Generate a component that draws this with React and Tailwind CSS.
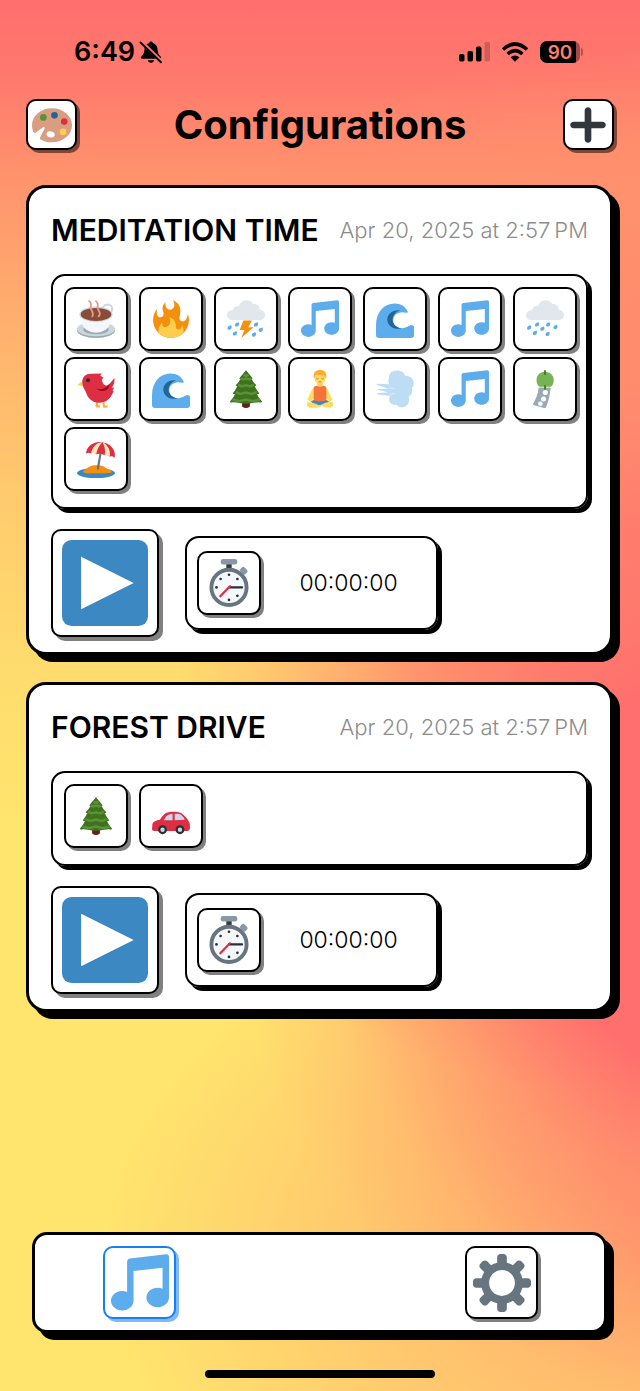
import React, { useState } from "react";

const MusicIcon = () => (
  <path
    fill="#5DADEC"
    d="M34.209.206L11.791 2.793C10.806 2.907 10 3.811 10 4.803v18.782C9.09 23.214 8.075 23 7 23c-3.865 0-7 2.685-7 6 0 3.314 3.135 6 7 6s7-2.686 7-6V10.539l18-2.077v13.124c-.91-.372-1.925-.586-3-.586-3.865 0-7 2.685-7 6 0 3.314 3.135 6 7 6s7-2.686 7-6V1.803c0-.992-.806-1.71-1.791-1.597z"
  />
);

const GearIcon = () => (
  <path
    fill="#66757F"
    d="M34 15h-3.362c-.324-1.369-.864-2.651-1.582-3.814l2.379-2.379c.781-.781.781-2.048 0-2.829l-1.414-1.414c-.781-.781-2.047-.781-2.828 0l-2.379 2.379C23.65 6.225 22.369 5.686 21 5.362V2c0-1.104-.896-2-2-2h-2c-1.104 0-2 .896-2 2v3.362c-1.369.324-2.651.864-3.814 1.582L8.808 4.565c-.781-.781-2.048-.781-2.828 0L4.565 5.979c-.781.781-.781 2.048-.001 2.829l2.379 2.379C6.225 12.35 5.686 13.632 5.362 15H2c-1.104 0-2 .896-2 2v2c0 1.104.896 2 2 2h3.362c.324 1.368.864 2.65 1.582 3.813l-2.379 2.379c-.78.78-.78 2.048.001 2.829l1.414 1.414c.78.78 2.047.78 2.828 0l2.379-2.379c1.163.719 2.445 1.258 3.814 1.582V34c0 1.104.896 2 2 2h2c1.104 0 2-.896 2-2v-3.362c1.368-.324 2.65-.864 3.813-1.582l2.379 2.379c.781.781 2.047.781 2.828 0l1.414-1.414c.781-.781.781-2.048 0-2.829l-2.379-2.379c.719-1.163 1.258-2.445 1.582-3.814H34c1.104 0 2-.896 2-2v-2C36 15.896 35.104 15 34 15zM18 26c-4.418 0-8-3.582-8-8s3.582-8 8-8 8 3.582 8 8-3.582 8-8 8z"
  />
);

const PlusIcon = () => (
  <path
    fill="#31373D"
    d="M31 15H21V5c0-1.657-1.343-3-3-3s-3 1.343-3 3v10H5c-1.657 0-3 1.343-3 3s1.343 3 3 3h10v10c0 1.657 1.343 3 3 3s3-1.343 3-3V21h10c1.657 0 3-1.343 3-3s-1.343-3-3-3z"
  />
);

const PaletteIcon = () => (
  <>
    <path
      fill="#D99E82"
      d="M18 3C8 3 0 9.8 0 18.2c0 2.400.5 4.600 1.400 6.300.5.9 1.300.8 2 .3l6.300-4.600c1.100-.8 2 0 1.500 1.200l-4 8c-.3.700 0 1.200.6 1.600C10.700 32.900 14.200 33.600 18 33.600c10 0 18-6.800 18-15.300S28 3 18 3z"
    />
    <ellipse cx="16.800" cy="26.400" rx="3.700" ry="2.700" fill="#fff" transform="rotate(12 16.800 26.400)" />
    <circle cx="10.200" cy="11.200" r="3" fill="#5C913B" />
    <circle cx="20.200" cy="9.300" r="3" fill="#226699" />
    <circle cx="29" cy="14.900" r="3" fill="#DD2E44" />
    <circle cx="28" cy="24.200" r="3" fill="#FFCC4D" />
  </>
);

const PlayIcon = () => (
  <>
    <rect width="36" height="36" rx="4" fill="#3B88C3" />
    <path d="M8 7l22 11L8 29z" fill="#fff" />
  </>
);

const CoffeeIcon = () => (
  <>
    <ellipse cx="18" cy="28.600" rx="18" ry="7.400" fill="#99AAB5" />
    <ellipse cx="18" cy="27.400" rx="18" ry="7" fill="#CCD6DD" />
    <ellipse cx="18" cy="28" rx="12" ry="4.500" fill="#99AAB5" />
    <circle cx="29" cy="8.500" r="4.300" fill="none" stroke="#CCD6DD" strokeWidth="2" />
    <path d="M2.500 13.500C2.500 22 7 31 18 31s15.500-9 15.500-17.500z" fill="#F5F8FA" />
    <ellipse cx="18" cy="13.500" rx="15.700" ry="7.300" fill="#CCD6DD" />
    <ellipse cx="18" cy="13.700" rx="14.500" ry="6.200" fill="#8A4B38" />
    <path
      d="M11.500 1c4 3 0 5 2 8 1.500 2.500 2.500 4 1 6.500M18 1c4 4 0 5 2 8 1.500 2.500 2.500 4 .5 6.500"
      fill="none"
      stroke="#E39F86"
      strokeWidth="1.700"
      strokeLinecap="round"
    />
  </>
);

const FireIcon = () => (
  <>
    <path
      fill="#F4900C"
      d="M35 19c0-2.062-.367-4.039-1.040-5.868-.46 5.389-3.333 8.157-6.335 6.868-2.812-1.208-.917-5.917-.777-8.164.236-3.809-.012-8.169-6.931-11.794 2.875 5.500.333 8.917-2.333 9.125-2.958.231-5.667-2.542-4.667-7.042-3.238 2.386-3.332 6.402-2.333 9 1.042 2.708-.042 4.958-2.583 5.208-2.840.28-4.418-3.041-2.963-8.333C2.520 10.965 1 14.805 1 19c0 9.389 7.611 17 17 17s17-7.611 17-17z"
    />
    <path
      fill="#FFCC4D"
      d="M28.394 23.999c.148 3.084-2.561 4.293-4.019 3.709-2.106-.843-1.541-2.291-2.083-5.291s-2.625-5.083-5.708-6c2.250 6.333-1.247 8.667-3.080 9.084-1.872.426-3.753-.001-3.968-4.007C7.352 23.668 6 26.676 6 30c0 .368.023.73.055 1.090C9.125 34.124 13.342 36 18 36s8.875-1.876 11.945-4.910c.032-.36.055-.722.055-1.090 0-2.187-.584-4.236-1.606-6.001z"
    />
  </>
);

const Cloud = () => (
  <path
    fill="#E1E8ED"
    d="M31 9.300c.3-3.400-2.600-6-6-5.300C23.700 1.600 21.400.3 18.700.3c-3.600 0-6.500 2.400-7.300 5.600C8.600 5.200 6 7 5.700 9.700 2.600 9.200 0 11.500 0 14.400 0 17.200 2.200 19 4.800 19h25.900c2.900 0 5.300-2.100 5.300-4.900 0-2.600-2.200-4.800-5-4.800z"
  />
);

const drop = "c1 1.600.4 3.900-1.500 4.200-1.700.2-2.500-1.300-1.800-2.500.8-1.200 2.200-1.300 3.300-1.700z";

const RainIcon = () => (
  <>
    <Cloud />
    <g fill="#5DADEC">
      <path d={`M12 21${drop}`} />
      <path d={`M4.500 24${drop}`} />
      <path d={`M22.500 21${drop}`} />
      <path d={`M29.500 23.500${drop}`} />
      <path d={`M17 25${drop}`} />
      <path d={`M10 29${drop}`} />
      <path d={`M22 30${drop}`} />
    </g>
  </>
);

const StormIcon = () => (
  <>
    <Cloud />
    <g fill="#5DADEC">
      <path d={`M11 21${drop}`} />
      <path d={`M4 24${drop}`} />
      <path d={`M9 29.500${drop}`} />
      <path d={`M29 21${drop}`} />
      <path d={`M33.500 26${drop}`} />
      <path d={`M27 30.500${drop}`} />
    </g>
    <path d="M15.500 19.500h8l-3.300 6.300H25L13.500 36l3-7.500H12z" fill="#F4900C" />
  </>
);

const WaveIcon = () => (
  <>
    <path
      fill="#5DADEC"
      d="M0 33V24C0 11 8 3.200 17.500 3.200c6 0 10.500 2.800 12.500 7.600.4 1-.3 1.500-1.200 1.200-4-1-7.800-.5-10.300 2C14.500 18.500 16.500 25 22 26.500c4 1.200 7-.8 10-2.300 2.500-1 4.200 0 4.200 2V33q0 3-3 3H3q-3 0-3-3z"
    />
    <path
      fill="#226699"
      d="M23 9.800C15 9 10.500 14 10.700 18.600 11 24.500 17 28.600 24.500 26.900 19 26 15.500 22.500 15.700 18.500 15.900 14.500 18.500 11.500 23 9.800z"
    />
  </>
);

const BirdIcon = () => (
  <>
    <path d="M18.500 29l1 5.500M25 29l.500 5.500M18 34.500h4M24.500 34.500h4.500M19.500 32l-1.500 2.500" stroke="#FFAC33" strokeWidth="1.900" fill="none" />
    <path d="M6 10L.3 14.300 6.500 15.500z" fill="#FFCC4D" />
    <path
      fill="#DD2E44"
      d="M5 11.500C4.800 6.500 8.500 3.500 13 3.500L23.500 3.200 22 5.500l3 1.500-1.500 2.500c1 3.500 2.500 6 5 5 3-1.500 5-4.500 7-7 .5 4-1 7-2.500 9l2.200.3-1.500 2.700 1 .5C32 27 28 31 21 31 14 31 10 26 8.500 21 7 18 5.200 15.500 5 11.500z"
    />
    <path d="M18.500 17.800c4.500 1 8.500 0 12.500-4.300-1 5.500-6 9-12.500 4.300z" fill="#A0041E" />
    <circle cx="10.500" cy="9.700" r="1.900" fill="#292F33" />
  </>
);

const TreeIcon = () => (
  <>
    <path d="M14.300 29h7.400v5.500q-3.700 3-7.400 0z" fill="#662113" />
    <path
      fill="#3E721D"
      d="M18 .3c2.500 2.800 4.500 5.500 6 7.200.5.8-.1 1-.9 1 2 3 2.700 4 4.400 5.500.6.700-.3 1.200-1.300 1.200 1.500 3.300 2.700 4.800 4 6.300.6.800-.3 1.300-1.700 1.300 1.200 3.200 2.700 5 4.300 6.500 1 1-.2 1.700-1.800 1.400-4-.3-8 1.300-13 1.300s-9-1.600-13-1.300c-1.600.3-2.800-.4-1.800-1.400 1.600-1.500 3.100-3.300 4.300-6.500-1.400 0-2.300-.5-1.700-1.300 1.300-1.500 2.500-3 4-6.300-1 0-1.900-.5-1.300-1.200 1.700-1.500 2.400-2.500 4.400-5.500-.8 0-1.400-.2-.9-1 1.500-1.700 3.500-4.400 6-7.200z"
    />
    <g stroke="#5C913B" strokeWidth="2.400" fill="none">
      <path d="M15.500 4.500l2.500 1 2.500-1" />
      <path d="M13 8l2.500 1 2.500-.8 2.500.8 2.500-1" />
      <path d="M10.500 14l3.500 1.500 4-1 4 1 3.500-1.500" />
      <path d="M8 21l4.500 1.700 5.500-1.400 5.500 1.400 4.500-1.700" />
      <path d="M5 28l6.500 1.500 6.500-1.500 6.500 1.500 6.500-1.500" />
    </g>
  </>
);

const MeditateIcon = () => (
  <>
    <path d="M13 16c-4 3-4.500 8-7 12l3 2 7-8M23 16c4 3 4.500 8 7 12l-3 2-7-8z" fill="#FFDC5D" />
    <path d="M9.500 29.500Q18 25 26.500 29.500L24 33.500H12z" fill="#3B88C3" />
    <path d="M6 30.500c5-.5 10 2 13.500 4.500-5 1-12 1.200-13.300-.5-.8-1.300-.7-2.800-.2-4zM30 30.500c-5-.5-8 1-11 2.500 1 2.500 9 3.500 10.800 1.500.8-1.300.7-2.800.2-4z" fill="#FFDC5D" />
    <path d="M15.500 11h5v5.500h-5z" fill="#F9CA55" />
    <path d="M12 17.500q0-2.500 3-2.500 3 2 6 0 3 0 3 2.500V29q-6 1.500-12 0z" fill="#F4743B" />
    <ellipse cx="18" cy="7.800" rx="5" ry="5.800" fill="#FFDC5D" />
    <path d="M12.300 8C11 2.500 14 0 18 0s7.200 2.500 5.700 8c-1-.5-1-2.500-2-3.500C18 6 15.500 4 14 4.800c-1 .7-.7 2.500-1.700 3.200z" fill="#FFAC33" />
    <path d="M14.300 8q1.200 1 2.300 0M19.400 8q1.200 1 2.300 0M16.700 11.300h2.600" stroke="#C1694F" strokeWidth=".8" fill="none" />
  </>
);

const WindIcon = () => (
  <>
    <path
      fill="#BDDDF4"
      d="M20 .5c4 0 7 2 7.500 5 4.500-.8 8.500 3 8.300 7 0 2-.8 3.300-1.800 4.300 1 4.200-.5 7-3 8.500 1.500 5-1.500 9.700-6 10-2.500.2-4.500-.7-5.500-2.300-3.500.7-7-1.500-7-5-.3-1.700.5-2.600 1-3.300L.8 23q-.8-.7.500-1l10.200-1-9.500-2q-.8-.5.500-1l9-.2L.8 14q-.8-1 .8-1l11 .5c-1-1.500-1.300-4-.2-6C12 3.500 15 .5 20 .5z"
    />
    <path d="M12 17l5 .5M13 23.500q2-1.500 5-1" stroke="#d8ebf8" strokeWidth="1" fill="none" />
  </>
);

const ChimeIcon = () => (
  <>
    <path d="M12.800 16.500h9.700q1 0 .8 1.300c-.8 6-1.500 11-4.300 17.500-.4.8-1 .8-1.800.6l-9.500-2.500q-1.500-.3-.8-1.600c2.300-4.500 4.800-9 4.900-14.300q0-1 1-1z" fill="#99AAB5" />
    <circle cx="18.300" cy="21.400" r="2.400" fill="#fff" />
    <circle cx="16.600" cy="27.400" r="2.400" fill="#fff" />
    <circle cx="13.600" cy="32" r="2.200" fill="#fff" />
    <path d="M18 1.700c5 0 8.300 3.500 8.300 8 0 3-1.200 5-2.800 6.200H12.800c-1.600-1.200-2.800-3.200-2.800-6.200 0-4.500 3-8 8-8z" fill="#77B255" />
    <path d="M18 .8v3.200M18 15v3" stroke="#3E721D" strokeWidth="1.600" strokeLinecap="round" />
  </>
);

const BeachIcon = () => (
  <>
    <ellipse cx="18" cy="31.300" rx="18" ry="4.900" fill="#3B88C3" />
    <path d="M6 29.500c3-1.500 4-5 11-5.500 7-.3 9 1.500 11 3 2 1.300 5 1.500 5 3 0 1-2 1.300-5 1.400H10c-3 0-5-1-4-1.900z" fill="#F4900C" />
    <path d="M24 3L19.800 27" stroke="#66757F" strokeWidth="2" strokeLinecap="round" />
    <path d="M8.500 13C9 6 16 .8 24 2.200 32 3.500 37.500 10 35.500 17c-1-1.500-3-2.200-4.500-1.200-1.700-1.600-3-2-4.800-1.300-1.500-1.200-6-2-8-.9-1.500-1.600-3.400-1.600-4.800-.9-1.700-1-3.600-1-4.900.3z" fill="#DD2E44" />
    <path d="M24 2.200C18 2.500 14.500 7 13.400 12.700c1.500-.7 3.500-.4 4.800.9C19 9 21 5 24 2.200zM24 2.200c2.500 3.500 3 8 2.200 12.300 2-.7 3.500-.2 4.800 1.300C32 10.500 29.500 4.500 24 2.200z" fill="#FFE8B6" />
  </>
);

const CarIcon = () => (
  <>
    <path
      fill="#DD2E44"
      d="M34.500 22.500c-1-2-4-5.500-6.500-7.200-3-1.800-11-1.900-14.500-.3C11 16.500 9 19.500 7.500 21.500 4 22 .8 23.500.4 25.500L0 30.500q0 1.700 2 1.700h31.500q2 0 2.300-2c.4-3 .2-5.500-1.300-7.700z"
    />
    <path d="M19.500 16v6H11c1.500-2.500 3-4.500 4.500-5.300 1-.5 2.500-.7 4-.7zM21.500 16c3-.1 5 .2 6.200 1 1.300 1 2.700 2.700 3.300 4.500l-9.500.5z" fill="#CCD6EE" />
    <circle cx="10" cy="31" r="4.200" fill="#292F33" />
    <circle cx="26.500" cy="31" r="4.200" fill="#292F33" />
    <circle cx="10" cy="31" r="2.100" fill="#CCD6DD" />
    <circle cx="26.500" cy="31" r="2.100" fill="#CCD6DD" />
  </>
);

const StopwatchIcon = () => (
  <>
    <rect x="16" y="3" width="4" height="5" fill="#31373D" />
    <rect x="11.800" y="0" width="12.400" height="4.200" rx="1.700" fill="#8899A6" />
    <rect x="26.400" y="6.500" width="5.400" height="4.500" rx="1.500" fill="#8899A6" transform="rotate(43 29 8.700)" />
    <circle cx="18" cy="21.300" r="13.200" fill="#F5F8FA" stroke="#66757F" strokeWidth="2.900" />
    <g fill="#292F33">
      <circle cx="18" cy="11.800" r="1" />
      <circle cx="18" cy="30.700" r="1" />
      <circle cx="8.600" cy="21.300" r="1" />
      <circle cx="11.700" cy="15" r="1" />
      <circle cx="24.300" cy="15" r="1" />
      <circle cx="24.300" cy="27.600" r="1" />
    </g>
    <path d="M18 21.300h9.800" stroke="#292F33" strokeWidth="1.600" strokeLinecap="round" />
    <path d="M18.700 20.500l-7.200 7.400" stroke="#DD2E44" strokeWidth="1.700" strokeLinecap="round" />
  </>
);

const soundIcons = {
  coffee: CoffeeIcon,
  fire: FireIcon,
  storm: StormIcon,
  music: MusicIcon,
  wave: WaveIcon,
  rain: RainIcon,
  bird: BirdIcon,
  tree: TreeIcon,
  meditate: MeditateIcon,
  wind: WindIcon,
  chime: ChimeIcon,
  beach: BeachIcon,
  car: CarIcon,
};

const configurations = [
  {
    id: 1,
    name: "MEDITATION TIME",
    date: "Apr 20, 2025 at 2:57\u2009PM",
    sounds: [
      "coffee", "fire", "storm", "music", "wave", "music", "rain",
      "bird", "wave", "tree", "meditate", "wind", "music", "chime",
      "beach",
    ],
    timer: "00:00:00",
  },
  {
    id: 2,
    name: "FOREST DRIVE",
    date: "Apr 20, 2025 at 2:57\u2009PM",
    sounds: ["tree", "car"],
    timer: "00:00:00",
  },
];

const Emoji = ({ icon: Icon, className }) => (
  <svg viewBox="0 0 36 36" className={className} aria-hidden="true">
    <Icon />
  </svg>
);

const tileClass =
  "flex size-16 items-center justify-center rounded-[10px] border-2 border-black bg-white shadow-[3px_3px_0_#808080]";

const StatusBar = () => (
  <div className="flex h-[104px] shrink-0 items-center justify-between pl-[74px] pr-[57px]">
    <div className="flex items-center gap-1">
      <span className="text-[27px] font-semibold leading-8">6:49</span>
      <svg viewBox="0 0 24 24" className="size-6" aria-hidden="true">
        <path d="M12 1.500c1 0 1.700.6 1.900 1.500 3 .9 4.600 3.300 4.700 6.700.1 3.700 1.600 5.300 3.200 7 .8.900.3 2-.8 2H3c-1.100 0-1.600-1.100-.8-2 1.600-1.700 3.100-3.300 3.200-7 .1-3.400 1.700-5.800 4.700-6.700.2-.9.900-1.500 1.900-1.500zM8.800 20.300h6.400c-.3 1.600-1.600 2.500-3.200 2.500s-2.900-.9-3.200-2.500z" />
        <path d="M2.500 2l20.500 20" stroke="#ff776d" strokeWidth="3.600" />
        <path d="M1.500 2.500l20.500 19.800" stroke="#000" strokeWidth="1.900" strokeLinecap="round" />
      </svg>
    </div>
    <div className="flex items-center gap-[11px]">
      <svg viewBox="0 0 31 20" className="h-5 w-[31px]" aria-hidden="true">
        <rect x="0" y="12" width="5.500" height="7.500" rx="1.700" />
        <rect x="8.500" y="9" width="5.500" height="10.500" rx="1.700" />
        <rect x="17" y="4.500" width="5.500" height="15" rx="1.700" />
        <rect x="25.500" y="0" width="5.500" height="19.500" rx="1.700" opacity=".2" />
      </svg>
      <svg viewBox="0 0 28 20" className="h-5 w-7" fill="none" stroke="#000" strokeWidth="3.600" aria-hidden="true">
        <path d="M2 7.500Q14-3.500 26 7.500" />
        <path d="M6.600 12Q14 5.200 21.400 12" />
        <path d="M14 19.800l-4.500-4.500q4.500-3.600 9 0z" fill="#000" stroke="none" />
      </svg>
      <div className="flex items-center gap-px">
        <span className="flex h-[22px] w-10 items-center justify-center rounded-[7px] bg-[linear-gradient(to_right,#000_90%,#a04b45_90%)] text-[19px] font-semibold leading-none text-[#ff7e6d]">
          90
        </span>
        <span className="h-2 w-0.5 rounded-r-full bg-black/30" />
      </div>
    </div>
  </div>
);

const ConfigurationCard = ({ config }) => {
  const [playing, setPlaying] = useState(false);

  return (
    <article className="rounded-[20px] border-[3px] border-black bg-white px-[22px] pb-[15px] pt-[22px] shadow-[7px_7px_0_#000]">
      <div className="flex h-10 items-center justify-between whitespace-nowrap">
        <h2 className="text-[30px] font-semibold">{config.name}</h2>
        <p className="text-[22px] font-light text-[#8c8c8c]">{config.date}</p>
      </div>

      <div className="mt-6 grid grid-cols-[repeat(7,64px)] justify-between gap-y-1.5 rounded-[14px] border-2 border-black pb-4 pl-[11px] pr-[9px] pt-[11px] shadow-[4px_4px_0_#000]">
        {config.sounds.map((sound, index) => (
          <button key={index} type="button" aria-label={sound} className={tileClass}>
            <Emoji icon={soundIcons[sound]} className="size-[38px]" />
          </button>
        ))}
      </div>

      <div className="mt-5 flex items-center gap-[26px]">
        <button
          type="button"
          aria-label="Play"
          aria-pressed={playing}
          onClick={() => setPlaying(!playing)}
          className="flex size-[108px] items-center justify-center rounded-[10px] border-2 border-black bg-white shadow-[4px_4px_0_#808080]"
        >
          <Emoji icon={PlayIcon} className="size-[86px]" />
        </button>
        <div className="flex w-[253px] items-center rounded-[14px] border-2 border-black py-[13px] pl-2.5 shadow-[4px_4px_0_#000]">
          <button type="button" aria-label="Set timer" className={tileClass}>
            <Emoji icon={StopwatchIcon} className="size-12" />
          </button>
          <span className="flex-1 text-center text-[23px] font-light">{config.timer}</span>
        </div>
      </div>
    </article>
  );
};

const App = () => {
  const [tab, setTab] = useState("sounds");

  const headerButton =
    "flex size-[51px] items-center justify-center rounded-[10px] border-2 border-black bg-white shadow-[3px_3px_0_rgba(0,0,0,0.5)]";
  const activeTab = "border-[#1580f5] shadow-[3px_3px_0_#80b8ff]";
  const idleTab = "border-black shadow-[3px_3px_0_#808080]";
  const tabButton = "flex size-[73px] items-center justify-center rounded-[10px] border-2 bg-white";

  return (
    <div className="flex min-h-screen flex-col bg-[radial-gradient(ellipse_82%_38%_at_118%_63%,#ff6f6d_0%,#ff6f6d_40%,rgba(255,111,109,0.5)_62%,rgba(255,111,109,0.12)_84%,rgba(255,111,109,0)_100%),radial-gradient(ellipse_66%_24%_at_92%_54%,rgba(255,111,109,0.7)_0%,rgba(255,111,109,0.5)_45%,rgba(255,111,109,0)_100%),radial-gradient(ellipse_110%_25%_at_118%_28%,#ff8a6d_0%,#ff8f6d_45%,rgba(255,143,109,0)_100%),radial-gradient(ellipse_100%_28%_at_115%_90%,#ffa06d_0%,rgba(255,160,109,0)_100%),linear-gradient(to_bottom,#ff6f6d_0%,#ff786d_5%,#ff946d_13%,#ffb26d_24%,#ffcb6d_36%,#ffdc6d_48%,#ffe56d_60%)] font-[Inter,sans-serif] text-black">
      <StatusBar />

      <header className="-mt-[5px] flex items-center justify-between px-[26px]">
        <button type="button" aria-label="Theme" className={headerButton}>
          <Emoji icon={PaletteIcon} className="size-10" />
        </button>
        <h1 className="text-[40px] font-bold leading-none">Configurations</h1>
        <button type="button" aria-label="Add configuration" className={headerButton}>
          <Emoji icon={PlusIcon} className="size-10" />
        </button>
      </header>

      <main className="mt-[35px] flex flex-1 flex-col gap-[27px] pl-[26px] pr-[27px]">
        {configurations.map((config) => (
          <ConfigurationCard key={config.id} config={config} />
        ))}
      </main>

      <nav className="ml-8 mr-[33px] mt-10 flex h-[101px] items-center justify-between rounded-[15px] border-[3px] border-black bg-white pl-[68px] pr-[66px] shadow-[7px_7px_0_#000]">
        <button
          type="button"
          aria-label="Sounds"
          onClick={() => setTab("sounds")}
          className={`${tabButton} ${tab === "sounds" ? activeTab : idleTab}`}
        >
          <Emoji icon={MusicIcon} className="size-[58px]" />
        </button>
        <button
          type="button"
          aria-label="Settings"
          onClick={() => setTab("settings")}
          className={`${tabButton} ${tab === "settings" ? activeTab : idleTab}`}
        >
          <Emoji icon={GearIcon} className="size-[58px]" />
        </button>
      </nav>

      <div className="mx-auto mb-[13px] mt-[37px] h-2 w-[230px] rounded-full bg-black" />
    </div>
  );
};

export default App;
